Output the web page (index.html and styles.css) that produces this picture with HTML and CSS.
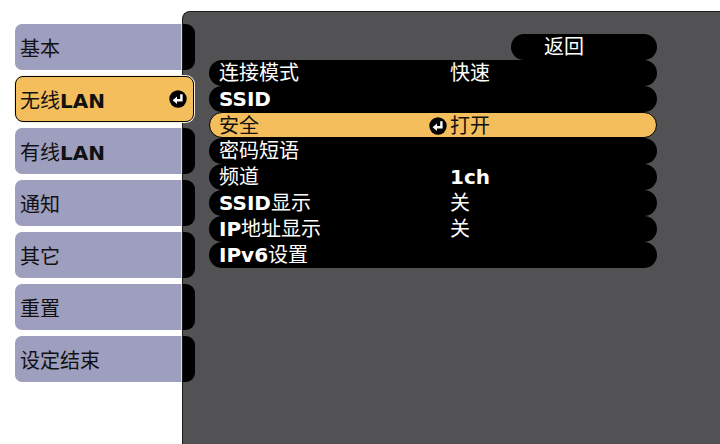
FILE: index.html
```html
<!DOCTYPE html>
<html lang="zh-CN">
<head>
    <meta charset="UTF-8">
    <title>无线LAN</title>
    <link rel="stylesheet" href="styles.css">
</head>
<body>
    <div class="screen">
        <div class="menu">
            <div class="tab"><span>基本</span></div>
            <div class="tab active"><span>无线<b>LAN</b></span>
                <svg class="enter" viewBox="0 0 18 18"><circle cx="9" cy="9" r="8.7" fill="#000"/><path d="M12.4 4.2v6H7" fill="none" stroke="#fff" stroke-width="2.4"/><path d="M3.6 10.2l4.4-3.8v7.6z" fill="#fff"/></svg>
            </div>
            <div class="tab"><span>有线<b>LAN</b></span></div>
            <div class="tab"><span>通知</span></div>
            <div class="tab"><span>其它</span></div>
            <div class="tab"><span>重置</span></div>
            <div class="tab"><span>设定结束</span></div>
        </div>

        <div class="panel">
            <div class="edges">
                <div class="edge"></div>
                <div class="edge blank"></div>
                <div class="edge"></div>
                <div class="edge"></div>
                <div class="edge"></div>
                <div class="edge"></div>
                <div class="edge"></div>
            </div>

            <div class="list">
                <div class="back">返回</div>
                <div class="row"><span class="label">连接模式</span><span class="mark"></span><span class="value">快速</span></div>
                <div class="row"><span class="label"><b>SSID</b></span><span class="mark"></span><span class="value"></span></div>
                <div class="row active"><span class="label">安全</span>
                    <span class="mark"><svg class="enter" viewBox="0 0 18 18"><circle cx="9" cy="9" r="8.7" fill="#000"/><path d="M12.4 4.2v6H7" fill="none" stroke="#fff" stroke-width="2.4"/><path d="M3.6 10.2l4.4-3.8v7.6z" fill="#fff"/></svg></span>
                    <span class="value">打开</span></div>
                <div class="row"><span class="label">密码短语</span><span class="mark"></span><span class="value"></span></div>
                <div class="row"><span class="label">频道</span><span class="mark"></span><span class="value"><b>1ch</b></span></div>
                <div class="row"><span class="label"><b>SSID</b>显示</span><span class="mark"></span><span class="value">关</span></div>
                <div class="row"><span class="label"><b>IP</b>地址显示</span><span class="mark"></span><span class="value">关</span></div>
                <div class="row"><span class="label"><b>IPv6</b>设置</span><span class="mark"></span><span class="value"></span></div>
            </div>
        </div>
    </div>
</body>
</html>
```

FILE: styles.css
```css
*{
    margin: 0;
    padding: 0;
    box-sizing: border-box;
}
body{
    background: #fff;
    font-family: "DejaVu Sans", "Noto Sans CJK SC", sans-serif;
    font-size: 20px;
}
b{
    font-weight: bold;
}
.screen{
    width: 720px;
    height: 444px;
    display: flex;
    overflow: hidden;
}

/* left tabs */
.menu{
    width: 182px;
    flex-shrink: 0;
    padding: 24px 0 0 15px;
    display: flex;
    flex-direction: column;
    gap: 6px;
}
.tab{
    height: 46px;
    background: #9e9ebf;
    color: #111;
    padding-left: 5px;
    display: flex;
    align-items: center;
    justify-content: space-between;
    border-radius: 7px 0 0 7px;
    border-right: 1px solid #d6d6e4;
}
.tab.active{
    position: relative;
    z-index: 1;
    margin-right: -12px;
    padding: 0 6px 0 4px;
    background: #f3be5b;
    border: 1px solid #000;
    border-radius: 8px;
    box-shadow: 0 0 0 1px #f6f0dc;
}
.enter{
    width: 18px;
    height: 18px;
    flex-shrink: 0;
    display: block;
}

/* right panel */
.panel{
    flex: 1;
    margin-top: 11px;
    background: #525254;
    border-left: 1px solid #1c1c1c;
    border-top: 1px solid #1c1c1c;
    border-top-left-radius: 8px;
    display: flex;
    align-items: flex-start;
}
.edges{
    width: 12px;
    padding-top: 12px;
    display: flex;
    flex-direction: column;
    gap: 6px;
}
.edge{
    height: 46px;
    background: #000;
    border-radius: 0 9px 9px 0;
}
.edge.blank{
    background: none;
}
.list{
    width: 448px;
    margin-left: 14px;
    padding-top: 22px;
    display: flex;
    flex-direction: column;
}
.back{
    align-self: flex-end;
    width: 146px;
    height: 26px;
    line-height: 26px;
    padding-left: 33px;
    background: #000;
    color: #fff;
    border-radius: 13px;
}
.row{
    height: 26px;
    line-height: 26px;
    background: #000;
    color: #fff;
    border-radius: 13px;
    padding-left: 10px;
    display: grid;
    grid-template-columns: 210px 21px 1fr;
    align-items: center;
}
.row.active{
    background: #f3be5b;
    color: #111;
    border: 1px solid #000;
    padding-left: 9px;
}
.mark{
    display: flex;
    align-items: center;
}
.value{
    white-space: nowrap;
}
```
